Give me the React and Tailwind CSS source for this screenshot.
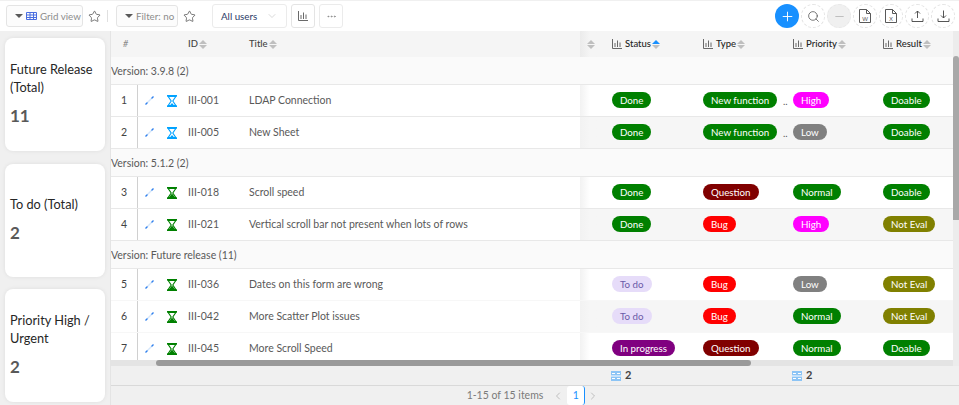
import React from "react";
import { ChevronDown, ChevronLeft, ChevronRight, Plus, Search, Minus, Star, Ellipsis } from "lucide-react";

const GREEN = "bg-[#008000] text-white";
const RED = "bg-[#ff0000] text-white";
const MAROON = "bg-[#800000] text-white";
const PINK = "bg-[#ff00ff] text-white";
const GRAY = "bg-[#808080] text-white";
const OLIVE = "bg-[#808000] text-white";
const LILAC = "bg-[#e6dcf9] text-[#6b5aa8]";
const PURPLE = "bg-[#800080] text-white";

const groups = [
  {
    label: "Version: 3.9.8 (2)",
    rows: [
      { n: 1, id: "III-001", title: "LDAP Connection", cyan: true, status: ["Done", GREEN], type: ["New function", GREEN], dots: true, priority: ["High", PINK], result: ["Doable", GREEN] },
      { n: 2, id: "III-005", title: "New Sheet", cyan: true, striped: true, status: ["Done", GREEN], type: ["New function", GREEN], dots: true, priority: ["Low", GRAY], result: ["Doable", GREEN] },
    ],
  },
  {
    label: "Version: 5.1.2 (2)",
    rows: [
      { n: 3, id: "III-018", title: "Scroll speed", status: ["Done", GREEN], type: ["Question", MAROON], priority: ["Normal", GREEN], result: ["Doable", GREEN] },
      { n: 4, id: "III-021", title: "Vertical scroll bar not present when lots of rows", striped: true, status: ["Done", GREEN], type: ["Bug", RED], priority: ["High", PINK], result: ["Not Eval", OLIVE] },
    ],
  },
  {
    label: "Version: Future release (11)",
    rows: [
      { n: 5, id: "III-036", title: "Dates on this form are wrong", faint: true, status: ["To do", LILAC], type: ["Bug", RED], priority: ["Low", GRAY], result: ["Not Eval", OLIVE] },
      { n: 6, id: "III-042", title: "More Scatter Plot issues", faint: true, striped: true, status: ["To do", LILAC], type: ["Bug", RED], priority: ["Normal", GREEN], result: ["Not Eval", OLIVE] },
      { n: 7, id: "III-045", title: "More Scroll Speed", faint: true, status: ["In progress", PURPLE], type: ["Question", MAROON], priority: ["Normal", GREEN], result: ["Doable", GREEN] },
    ],
  },
];

const cards = [
  { title: "Future Release (Total)", value: 11 },
  { title: "To do (Total)", value: 2 },
  { title: "Priority High / Urgent", value: 2 },
];

const COLS = "grid grid-cols-[27px_50px_61px_331px_20px_12px_91px_90px_90px_76px]";

const Caret = () => <span className="shrink-0 w-0 h-0 border-x-[4px] border-x-transparent border-t-[4px] border-t-[#595959]" />;

const Sorter = ({ active }) => (
  <span className="inline-flex flex-col gap-[1px] ml-[1px]">
    <span className={`w-0 h-0 border-x-[4px] border-x-transparent border-b-[4px] ${active ? "border-b-[#1890ff]" : "border-b-[#bfbfbf]"}`} />
    <span className="w-0 h-0 border-x-[4px] border-x-transparent border-t-[4px] border-t-[#bfbfbf]" />
  </span>
);

const GridIcon = () => (
  <svg width="11" height="8" viewBox="0 0 11 8" fill="none" stroke="#4a6ee0" strokeWidth="1" className="shrink-0">
    <path d="M.5.5h10v7H.5zM.5 3h10M.5 5.5h10M4 .5v7M7.5.5v7" />
  </svg>
);

const BarsIcon = ({ className = "mr-[3px]" }) => (
  <svg width="10" height="10" viewBox="0 0 10 10" fill="none" stroke="#595959" strokeWidth="0.9" className={className}>
    <path d="M.5 0v9.5H10M3 8V4M5.5 8V1.5M8 8V3.5" />
  </svg>
);

const ExpandIcon = () => (
  <svg width="9" height="9" viewBox="0 0 9 9" fill="none" stroke="#2f80ed" strokeWidth="1.4" className="shrink-0">
    <path d="M.5 8.5L2.5 6.5M6.5 2.5L8.5.5" />
    <path d="M2.5 6.5L6.5 2.5" strokeOpacity="0.2" />
  </svg>
);

const Glass = ({ cyan }) => {
  const color = cyan ? "#00a2ff" : "#008000";
  return (
    <svg width="10" height="12" viewBox="0 0 10 12" className="block shrink-0">
      <path d="M0 0h10v1.5H0zM0 10.5h10V12H0z" fill={color} />
      <path d="M1.2 1.5h7.6L5.8 6l3 4.5H1.2l3-4.5z" fill="none" stroke={color} strokeWidth="1.1" />
      <path d={cyan ? "M5 8l2.5 3h-5z" : "M5 6.5l3.5 4.5h-7z"} fill={color} />
    </svg>
  );
};

const DocIcon = ({ letter }) => (
  <svg width="12" height="14" viewBox="0 0 12 14" fill="none" stroke="#595959" strokeWidth="1">
    <path d="M.5.5h7l4 4v9h-11zM7.5.5v4h4" />
    <text x="6" y="11.5" fontSize="6" fill="#595959" stroke="none" textAnchor="middle" fontFamily="Liberation Sans, sans-serif">{letter}</text>
  </svg>
);

const TrayArrow = ({ down }) => (
  <svg width="13" height="12" viewBox="0 0 13 12" fill="none" stroke="#434343" strokeWidth="0.9">
    <path d={down ? "M6.5 .5v7.5M4 5.5l2.5 2.5 2.5-2.5" : "M6.5 8V1M4 3.5L6.5 1 9 3.5"} />
    <path d="M1 8.5v3h11v-3" />
  </svg>
);

const TotalIcon = () => (
  <svg width="10" height="10" viewBox="0 0 10 10" className="shrink-0">
    <rect width="10" height="10" fill="#8cc4f5" />
    <path d="M1 2.5h3M6 2.5h3M1 7.5h3M6 7.5h3M0 5h10" stroke="#fff" strokeWidth="1" />
  </svg>
);

const Round = ({ children, gray }) => (
  <button className={`w-[24px] h-[24px] rounded-full flex items-center justify-center border border-dashed ${gray ? "bg-[#f0f0f0] border-[#e8e8e8]" : "bg-white border-[#e4e4e4]"}`}>
    {children}
  </button>
);

const Tag = ({ tag }) => (
  <span className={`inline-block h-[16px] leading-[16px] px-[8px] rounded-full text-[9.75px] whitespace-nowrap ${tag[1]}`}>{tag[0]}</span>
);

const HeadCell = ({ label, active }) => (
  <div className="flex items-center text-[9.5px] font-medium text-[#262626]">
    <BarsIcon />
    <span>{label}</span>
    <Sorter active={active} />
  </div>
);

const Row = ({ row }) => {
  const right = row.striped ? "bg-[#f6f6f6]" : "bg-white";
  return (
    <div className={`${COLS} h-[32px] items-center border-b text-[10.5px] text-[#595959] ${row.faint ? "border-[#f7f7f7]" : "border-[#e8e8e8]"}`}>
      <div className="h-full flex items-center justify-center bg-white border-r border-[#d0d0d0] text-[#434343]">{row.n}</div>
      <div className="h-full flex items-center pl-[7px] gap-[13px] bg-white">
        <ExpandIcon />
        <Glass cyan={row.cyan} />
      </div>
      <div className="h-full flex items-center bg-white">{row.id}</div>
      <div className="h-full flex items-center bg-white whitespace-nowrap">{row.title}</div>
      <div className={`h-full bg-gradient-to-r from-[#f2f2f2] ${row.striped ? "to-[#f6f6f6]" : "to-white"} to-50%`} />
      <div className={`h-full ${right}`} />
      <div className={`h-full flex items-center pb-[1px] ${right}`}><Tag tag={row.status} /></div>
      <div className={`h-full flex items-center pb-[1px] ${right}`}><Tag tag={row.type} /></div>
      <div className={`relative h-full flex items-center pb-[1px] ${right}`}>
        {row.dots && <span className="absolute left-[-10px] top-[9px] text-[10px] text-[#595959]">..</span>}
        <Tag tag={row.priority} />
      </div>
      <div className={`h-full flex items-center pb-[1px] ${right}`}><Tag tag={row.result} /></div>
    </div>
  );
};

const App = () => {
  return (
    <div className="w-[959px] h-[405px] overflow-hidden flex flex-col bg-white font-['Lato','Noto_Sans',sans-serif]">
      {/* toolbar */}
      <div className="h-[31px] shrink-0 flex items-center pl-[6px] pr-[4px] border-t border-[#f0f0f0]">
        <button className="w-[77px] h-[22px] border border-[#e4e4e4] rounded-[3px] bg-[#fcfcfc] flex items-center pl-[8px] gap-[3px] text-[9.75px] text-[#8c8c8c] whitespace-nowrap">
          <Caret />
          <GridIcon />
          Grid view
        </button>
        <Star size={13} className="ml-[5px] text-[#434343]" strokeWidth={1.3} />
        <span className="ml-[6px] w-px h-[12px] bg-[#e0e0e0]" />
        <button className="ml-[8px] w-[62px] h-[22px] border border-[#e4e4e4] rounded-[3px] bg-[#fcfcfc] flex items-center pl-[8px] gap-[3px] text-[9.75px] text-[#8c8c8c] whitespace-nowrap">
          <Caret />
          Filter: no
        </button>
        <Star size={13} className="ml-[5px] text-[#434343]" strokeWidth={1.3} />
        <div className="ml-[16px] w-[75px] h-[24px] border border-[#ebebeb] rounded-[3px] flex items-center justify-between pl-[8px] pr-[8px] text-[9.75px] text-[#2b3a67] whitespace-nowrap">
          All users
          <ChevronDown size={12} className="text-[#bfbfbf]" strokeWidth={1.2} />
        </div>
        <button className="ml-[4px] w-[24px] h-[24px] border border-[#e4e4e4] rounded-[3px] flex items-center justify-center">
          <BarsIcon className="" />
        </button>
        <button className="ml-[4px] w-[24px] h-[24px] border border-[#ebebeb] rounded-[3px] flex items-center justify-center">
          <Ellipsis size={11} className="text-[#8c8c8c]" />
        </button>
        <div className="ml-auto flex items-center gap-[2px]">
          <button className="w-[24px] h-[24px] rounded-full bg-[#1890ff] flex items-center justify-center">
            <Plus size={15} className="text-white" strokeWidth={1.5} />
          </button>
          <Round><Search size={13} className="text-[#434343]" strokeWidth={1.3} /></Round>
          <Round gray><Minus size={13} className="text-[#bfbfbf]" /></Round>
          <Round><DocIcon letter="W" /></Round>
          <Round><DocIcon letter="X" /></Round>
          <Round><TrayArrow /></Round>
          <Round><TrayArrow down /></Round>
        </div>
      </div>

      <div className="flex-1 min-h-0 flex">
        {/* summary cards */}
        <div className="w-[111px] shrink-0 bg-[#f0f0f0] border-r border-[#e4e4e4] pt-[7px] pl-[5px] flex flex-col gap-[12.5px]">
          {cards.map((card) => (
            <div key={card.title} className="w-[100px] h-[113px] bg-white rounded-[8px] shadow-[0_0_4px_rgba(0,0,0,0.08)] pl-[5px] pr-[3px] flex flex-col justify-center">
              <div className="text-[12.75px] leading-[18px] text-[#262626] -mt-[1px]">{card.title}</div>
              <div className="mt-[8px] text-[17px] leading-[24px] font-bold text-[#595959]">{card.value}</div>
            </div>
          ))}
        </div>

        {/* table */}
        <div className="flex-1 min-w-0 flex flex-col bg-[#f0f0f0]">
          <div className="relative h-[335px] shrink-0 overflow-hidden">
            <div className={`${COLS} h-[26px] items-center bg-[#f5f5f5] text-[9.5px] font-medium text-[#434343]`}>
              <div className="pl-[12px] text-[9px] text-[#8c8c8c] italic">#</div>
              <div />
              <div className="flex items-center">ID<Sorter /></div>
              <div className="flex items-center">Title<Sorter /></div>
              <div className="h-full pl-[6px] flex items-center bg-gradient-to-r from-[#ebebeb] to-[#f5f5f5] to-50%"><Sorter /></div>
              <div />
              <HeadCell label="Status" active />
              <HeadCell label="Type" />
              <HeadCell label="Priority" />
              <HeadCell label="Result" />
            </div>
            {groups.map((group) => (
              <div key={group.label}>
                <div className="h-[28px] pt-[3px] flex items-center bg-[#fafafa] border-b border-[#e8e8e8] text-[10.5px] text-[#595959]">{group.label}</div>
                {group.rows.map((row) => <Row key={row.n} row={row} />)}
              </div>
            ))}
            {/* scrollbars */}
            <div className="absolute top-0 right-0 bottom-0 w-[6px] bg-[#ececec]">
              <div className="mt-[25px] h-[164px] rounded-t-[3px] bg-[#a8a8a8]" />
            </div>
            <div className="absolute left-0 right-[6px] bottom-0 h-[6px] bg-[#e4e4e4]">
              <div className="ml-[45px] w-[595px] h-full rounded-full bg-[#9a9a9a]" />
            </div>
          </div>

          {/* totals */}
          <div className={`${COLS} h-[20px] shrink-0 items-center border-b border-[#d9d9d9] text-[11px] font-bold text-[#434343]`}>
            <div className="col-start-7 flex items-center gap-[4px] -ml-[1px]"><TotalIcon />2</div>
            <div className="col-start-9 flex items-center gap-[4px] -ml-[1px]"><TotalIcon />2</div>
          </div>

          {/* pagination */}
          <div className="flex-1 flex items-center justify-center pr-[4px] text-[10.5px] text-[#7a7a7a]">
            <span>1-15 of 15 items</span>
            <ChevronLeft size={12} className="ml-[9px] text-[#bfbfbf]" />
            <span className="ml-[3px] w-[18px] h-full bg-white border-r border-[#1890ff] rounded-[3px] text-[#1890ff] flex items-center justify-center">1</span>
            <ChevronRight size={12} className="ml-[2px] text-[#bfbfbf]" />
          </div>
        </div>
      </div>
    </div>
  );
};

export default App;
